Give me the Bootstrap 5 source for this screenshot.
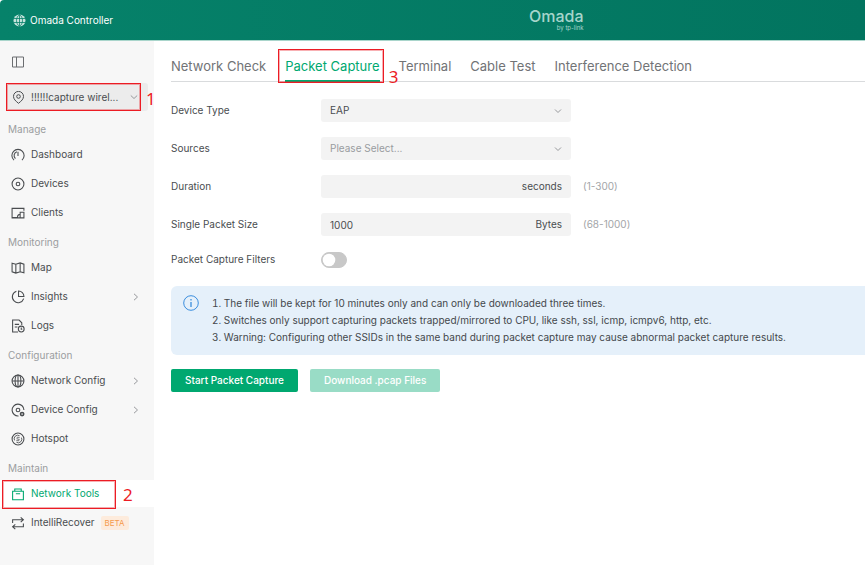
<!DOCTYPE html>
<html lang="en">
<head>
<meta charset="utf-8">
<meta name="viewport" content="width=device-width, initial-scale=1">
<title>Omada Controller</title>
<link href="https://cdn.jsdelivr.net/npm/bootstrap@5.3.0/dist/css/bootstrap.min.css" rel="stylesheet">
<style>
  :root { --ink: #4a4d50; --soft: #9b9da0; --brand: #00a870; --note: #ec1c24; }
  body { font-family: Inter, "Liberation Sans", sans-serif; font-size: 10px; line-height: 17px; color: var(--ink); background: #fff; }
  svg { fill: none; stroke: currentColor; flex: none; display: block; }
  .topbar { height: 41px; background: linear-gradient(90deg, #06826a, #02745f); border-bottom: 1px solid #a9d5cb; border-top-left-radius: 4px; color: #fff; padding: 0 13px; }
  .topbar a { color: #fff; }
  .brand-logo { color: #a6d5cb; margin-right: 32%; }
  .brand-name { font-size: 16px; line-height: 16px; font-weight: 500; }
  .brand-by { font-size: 6px; line-height: 8px; }
  .side { width: 154px; background: #f7f7f7; min-height: calc(100vh - 41px); }
  .side-toggle { padding: 0; margin: 14px 0 14px 12px; color: #6b6d70; }
  .site-pick { width: 141px; height: 28px; margin-left: 7px; padding: 0 10px 0 5px; font-size: 10px; color: var(--ink); background: #ececec; border: 0; border-radius: 3px; gap: 6px; }
  .side-head { font-size: 10px; line-height: 22px; margin: 4px 0 0; padding-left: 8px; font-weight: 400; color: var(--soft); }
  .side-head-first { margin-top: 7px; }
  .side .nav-link { height: 27px; margin: 1px 0; padding: 0 15px 0 11px; color: var(--ink); gap: 6px; }
  .side .nav-link.active { background: #fff; color: var(--brand); }
  .chev { color: #97999c; }
  .beta { background: #fdebdc; color: #f59a4c; font-size: 8px; line-height: 14px; padding: 0 4px; border-radius: 2px; }
  .content { padding: 10px 0 16px 17px; }
  .tool-tabs { border-bottom: 1px solid #d9dbdd; gap: 19px; height: 31px; }
  .tool-tabs .nav-link { padding: 0; height: 31px; line-height: 30px; font-size: 13px; color: #717376; border-bottom: 2px solid transparent; white-space: nowrap; }
  .tool-tabs .nav-link.active { color: var(--brand); border-color: var(--brand); }
  .form-area { padding-top: 17px; gap: 15px; }
  .field-label { width: 150px; }
  .field-box { width: 250px; }
  .field-box .form-select, .field-box .form-control, .field-box .input-group-text { height: 23px; min-height: 23px; font-size: 10px; line-height: 17px; padding: 3px 9px; border: 0; background-color: #f3f3f3; color: var(--ink); border-radius: 3px; }
  .field-box .form-select { background-image: url("data:image/svg+xml,%3Csvg xmlns='http://www.w3.org/2000/svg' viewBox='0 0 8 8'%3E%3Cpath fill='none' stroke='%2397999c' d='M1 2.5l3 3 3-3'/%3E%3C/svg%3E"); background-size: 8px 8px; background-position: right 9px center; }
  .field-box .form-select.unset { color: #999ca0; }
  .range-hint { color: #a3a5a8; padding-left: 12px; }
  .form-switch.filter-switch { padding: 0; min-height: 0; margin: 0; }
  .filter-switch .form-check-input { width: 26px; height: 16px; margin: 0; float: none; display: block; border: 1px solid #c8c8c8; background-color: #c8c8c8; background-image: url("data:image/svg+xml,%3Csvg xmlns='http://www.w3.org/2000/svg' viewBox='-4 -4 8 8'%3E%3Ccircle r='3.6' fill='%23fff'/%3E%3C/svg%3E"); }
  .tip { margin-top: 18px; padding: 9px 12px; background: #e5f0fa; border-radius: 6px 0 0 6px; gap: 13px; color: #44484c; }
  .tip svg { color: #3b8ede; }
  .tip ol { padding: 0; list-style-position: inside; }
  .actions { margin-top: 14px; gap: 12px; }
  .actions .btn { height: 23px; padding: 0 14px; font-size: 10px; line-height: 23px; font-weight: 500; border: 0; border-radius: 2px; color: #fff; background: var(--brand); }
  .actions .btn:disabled { background: #99dcc6; opacity: 1; }
  /* Step callouts over the interface */
  .step { position: relative; }
  .step-frame { position: absolute; border: 1px solid var(--note); box-shadow: inset 0 0 0 1px rgba(236, 28, 36, .35); pointer-events: none; }
  .step-no { position: absolute; color: var(--note); font: 17px/17px "Noto Sans", sans-serif; }
  .frame-site { inset: 0 13px 0 6px; } .no-site { left: 146px; top: 7px; }
  .frame-nav { inset: 1px 38px -1px 2px; } .no-nav { left: 123px; top: 7px; }
  .frame-tab { inset: -2px -4px -2px -7px; } .no-tab { right: -19px; top: 17px; }
</style>
<script src="https://cdn.jsdelivr.net/npm/bootstrap@5.3.0/dist/js/bootstrap.bundle.min.js"></script>
</head>
<body>
<header class="topbar d-flex align-items-center">
  <a href="#" class="d-flex align-items-center gap-1 text-decoration-none">
    <svg width="13" height="13" viewBox="0 0 13 13"><circle cx="6.500" cy="6.500" r="6" fill="#c5e3dc" stroke="none"/><path stroke="#06826a" stroke-width=".8" d="M.5 4.500h12M.5 8.500h12M6.500.5v12M6.500.5c-4 3-4 9 0 12M6.500.5c4 3 4 9 0 12"/></svg>
    <span>Omada Controller</span>
  </a>
  <div class="brand-logo ms-auto d-flex flex-column align-items-end"><span class="brand-name">Omada</span><span class="brand-by">by tp-link</span></div>
</header>

<div class="d-flex">
  <aside class="side flex-shrink-0">
    <button class="btn side-toggle border-0 d-block" type="button" aria-label="Collapse menu">
      <svg width="12" height="14" viewBox="0 0 12 14"><path d="M.5 2h11v10H.5zM4.500 2v10"/></svg>
    </button>
    <div class="step">
      <button class="site-pick d-flex align-items-center" type="button">
        <svg width="13" height="13" viewBox="0 0 13 13"><path d="M6.500 12.300C3.500 10 1.500 8 1.500 5.400a5 5 0 0 1 10 0c0 2.600-2 4.600-5 6.900z"/><circle cx="6.500" cy="5.500" r="1.800"/></svg>
        <span class="me-auto">!!!!!!capture wirel...</span>
        <svg class="chev" width="8" height="8" viewBox="0 0 8 8"><path d="M.8 2.500 4 5.500l3.200-3"/></svg>
      </button>
      <span class="step-frame frame-site"></span><span class="step-no no-site">1</span>
    </div>

    <nav class="nav flex-column flex-nowrap">
      <h2 class="side-head side-head-first">Manage</h2>
      <a class="nav-link d-flex align-items-center" href="#"><svg width="14" height="14" viewBox="0.5 0.5 13 13"><path d="M3.300 11.800a5.700 5.700 0 1 1 7.400 0M4.600 10.300A3.700 3.700 0 0 1 6 4M7 4v4"/></svg>Dashboard</a>
      <a class="nav-link d-flex align-items-center" href="#"><svg width="14" height="14" viewBox="0.5 0.5 13 13"><circle cx="7" cy="7" r="5.500"/><circle cx="7" cy="7" r="1.700"/></svg>Devices</a>
      <a class="nav-link d-flex align-items-center" href="#"><svg width="14" height="14" viewBox="0.5 0.5 13 13"><path d="M12.500 5V2.700h-11v8.600H6.500M6.500 11.300c0-2 .8-3 2.500-3M9 11.500V6.300h3.500v5.200zM1 11.500h12"/></svg>Clients</a>

      <h2 class="side-head">Monitoring</h2>
      <a class="nav-link d-flex align-items-center" href="#"><svg width="14" height="14" viewBox="0.5 0.5 13 13"><path d="M1.500 2.500 5 3.500 9 2.300l3.500 1.200v8L9 10.500l-4 1.200-3.500-1.200zM5 3.500v8.200M9 2.300v8.200"/></svg>Map</a>
      <a class="nav-link d-flex align-items-center" href="#"><svg width="14" height="14" viewBox="0.5 0.5 13 13"><path d="M5.500 1.700A5.400 5.400 0 1 0 12.300 8.500M7.500 1.500v5h5a5 5 0 0 0-5-5z"/></svg>Insights<svg class="chev ms-auto" width="7" height="8" viewBox="0 0 7 8"><path d="m2 .8 3.500 3.200L2 7.200"/></svg></a>
      <a class="nav-link d-flex align-items-center" href="#"><svg width="14" height="14" viewBox="0.5 0.5 13 13"><path d="M7 12.500H2v-11h6l2.500 2.500v2M4 5.500h4M4 8h2.500"/><circle cx="10" cy="9.800" r="2.700"/><path d="M10 8.300v1.700h1"/></svg>Logs</a>

      <h2 class="side-head">Configuration</h2>
      <a class="nav-link d-flex align-items-center" href="#"><svg width="14" height="14" viewBox="0.5 0.5 13 13"><circle cx="7" cy="7" r="5.500"/><ellipse cx="7" cy="7" rx="2.700" ry="5.500"/><path d="M1.500 7h11M7 1.500v11"/></svg>Network Config<svg class="chev ms-auto" width="7" height="8" viewBox="0 0 7 8"><path d="m2 .8 3.500 3.200L2 7.200"/></svg></a>
      <a class="nav-link d-flex align-items-center" href="#"><svg width="14" height="14" viewBox="0.5 0.5 13 13"><path d="M7.500 12.500A5.500 5.500 0 1 1 12.500 7"/><circle cx="7" cy="7" r="1.700"/><circle cx="10.800" cy="10.800" r="1.500" stroke-width="1.500"/></svg>Device Config<svg class="chev ms-auto" width="7" height="8" viewBox="0 0 7 8"><path d="m2 .8 3.500 3.200L2 7.200"/></svg></a>
      <a class="nav-link d-flex align-items-center" href="#"><svg width="14" height="14" viewBox="0.5 0.5 13 13"><circle cx="7" cy="7" r="5.500"/><path stroke-width=".8" d="M3.800 8.300A3.300 3.300 0 0 1 8.500 4M10.200 5.700A3.300 3.300 0 0 1 5.500 10M8.500 5.800C7 5 5.500 5.500 6 6.500s2 .3 2.200 1.200-1.500 1.200-2.700.5"/></svg>Hotspot</a>

      <h2 class="side-head">Maintain</h2>
      <div class="step">
        <a class="nav-link active d-flex align-items-center" href="#" aria-current="page"><svg width="14" height="14" viewBox="0.5 0.5 13 13"><path d="M2 4.500h10v7.800H2zM4 4.500V2.300h6v2.200M5 6.800h4"/></svg>Network Tools</a>
        <span class="step-frame frame-nav"></span><span class="step-no no-nav">2</span>
      </div>
      <a class="nav-link d-flex align-items-center" href="#"><svg width="14" height="14" viewBox="0.5 0.5 13 13"><path d="M2 7V4h9.500M9.500 1.800 12 4 9.500 6.200M12 7.500v3H2.500M4.500 8.300 2 10.500l2.500 2.200"/></svg>IntelliRecover<span class="beta">BETA</span></a>
    </nav>
  </aside>

  <main class="content flex-grow-1">
    <nav class="tool-tabs nav flex-nowrap">
      <a class="nav-link" href="#">Network Check</a>
      <div class="step"><a class="nav-link active" href="#" aria-current="page">Packet Capture</a><span class="step-frame frame-tab"></span><span class="step-no no-tab">3</span></div>
      <a class="nav-link" href="#">Terminal</a>
      <a class="nav-link" href="#">Cable Test</a>
      <a class="nav-link" href="#">Interference Detection</a>
    </nav>

    <form>
      <div class="form-area d-flex flex-column">
        <div class="d-flex align-items-center"><label class="field-label" for="type">Device Type</label><div class="field-box"><select id="type" class="form-select"><option>EAP</option></select></div></div>
        <div class="d-flex align-items-center"><label class="field-label" for="src">Sources</label><div class="field-box"><select id="src" class="form-select unset"><option>Please Select...</option></select></div></div>
        <div class="d-flex align-items-center"><label class="field-label" for="dur">Duration</label><div class="field-box input-group"><input id="dur" class="form-control" type="text"><span class="input-group-text">seconds</span></div><span class="range-hint">(1-300)</span></div>
        <div class="d-flex align-items-center"><label class="field-label" for="size">Single Packet Size</label><div class="field-box input-group"><input id="size" class="form-control" type="text" value="1000"><span class="input-group-text">Bytes</span></div><span class="range-hint">(68-1000)</span></div>
        <div class="d-flex align-items-center"><label class="field-label" for="filters">Packet Capture Filters</label><div class="form-check form-switch filter-switch"><input id="filters" class="form-check-input" type="checkbox" role="switch"></div></div>
      </div>
      <div class="tip d-flex align-items-start">
        <svg width="16" height="16" viewBox="0 0 16 16"><circle cx="8" cy="8" r="7.300"/><path stroke-width="1.300" d="M8 7v5M8 4v1.500"/></svg>
        <ol class="mb-0">
          <li>The file will be kept for 10 minutes only and can only be downloaded three times.</li>
          <li>Switches only support capturing packets trapped/mirrored to CPU, like ssh, ssl, icmp, icmpv6, http, etc.</li>
          <li>Warning: Configuring other SSIDs in the same band during packet capture may cause abnormal packet capture results.</li>
        </ol>
      </div>
      <div class="actions d-flex">
        <button class="btn" type="button">Start Packet Capture</button>
        <button class="btn" type="button" disabled>Download .pcap Files</button>
      </div>
    </form>
  </main>
</div>
</body>
</html>
